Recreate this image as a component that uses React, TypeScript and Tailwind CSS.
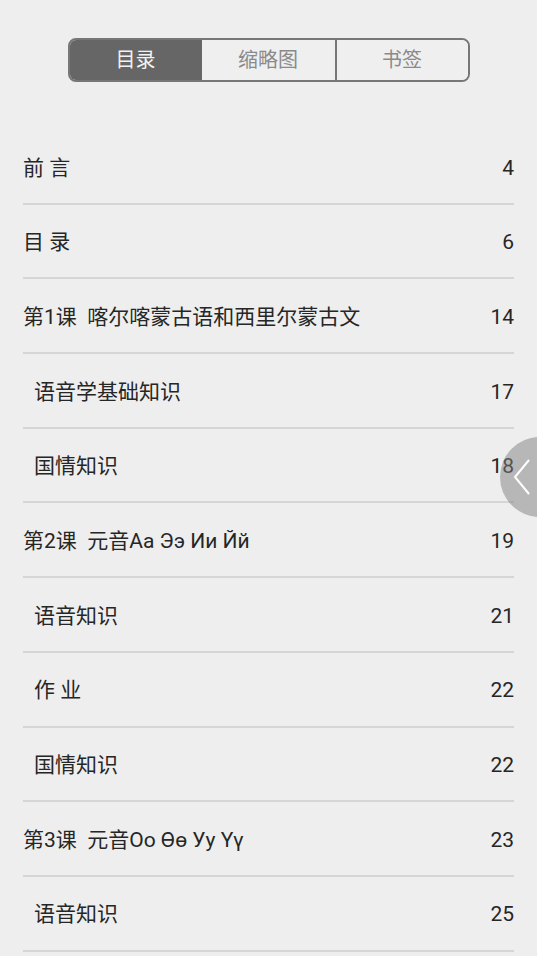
const font = { fontFamily: "Roboto, 'Noto Sans CJK SC', sans-serif" }

const rows: { title: string; page: number; sub?: boolean }[] = [
  { title: '前 言', page: 4 },
  { title: '目 录', page: 6 },
  { title: '第1课  喀尔喀蒙古语和西里尔蒙古文', page: 14 },
  { title: '语音学基础知识', page: 17, sub: true },
  { title: '国情知识', page: 18, sub: true },
  { title: '第2课  元音Aa Ээ Ии Йй', page: 19 },
  { title: '语音知识', page: 21, sub: true },
  { title: '作 业', page: 22, sub: true },
  { title: '国情知识', page: 22, sub: true },
  { title: '第3课  元音Oo Өө Уу Үү', page: 23 },
  { title: '语音知识', page: 25, sub: true },
]

export default function App() {
  return (
    <div className="relative h-[956px] w-[537px] overflow-hidden bg-[#eeeeee]" style={font}>
      <div className="flex justify-center pt-[38px]">
        <div className="grid h-[44px] w-[402px] grid-cols-[132px_135px_1fr] overflow-hidden rounded-[8px] border-2 border-[#777777] text-[20px]">
          <div className="flex items-center justify-center bg-[#666666] text-[#f2f2f2]">目录</div>
          <div className="flex items-center justify-center border-r-2 border-[#777777] bg-[#efefef] text-[#8a8a8a]">缩略图</div>
          <div className="flex items-center justify-center bg-[#efefef] text-[#8a8a8a]">书签</div>
        </div>
      </div>

      <div className="mx-[23px] mt-[48px]">
        {rows.map((r, i) => (
          <div
            key={i}
            className="flex h-[74.7px] items-center justify-between border-b-2 border-[#d6d6d6] pt-[4px] text-[21px] text-[#262626]"
          >
            <span className={'whitespace-pre ' + (r.sub ? 'pl-[11px]' : '')}>{r.title}</span>
            <span>{r.page}</span>
          </div>
        ))}
      </div>

      <div className="absolute left-[500px] top-[437px] h-[80px] w-[80px] rounded-full bg-[rgba(128,128,128,0.5)]">
        <svg width="40" height="80" viewBox="0 0 40 80" className="absolute left-0 top-0">
          <path d="M29 23 L15 40 L29 57" fill="none" stroke="#ffffff" strokeWidth="2" />
        </svg>
      </div>
    </div>
  )
}
